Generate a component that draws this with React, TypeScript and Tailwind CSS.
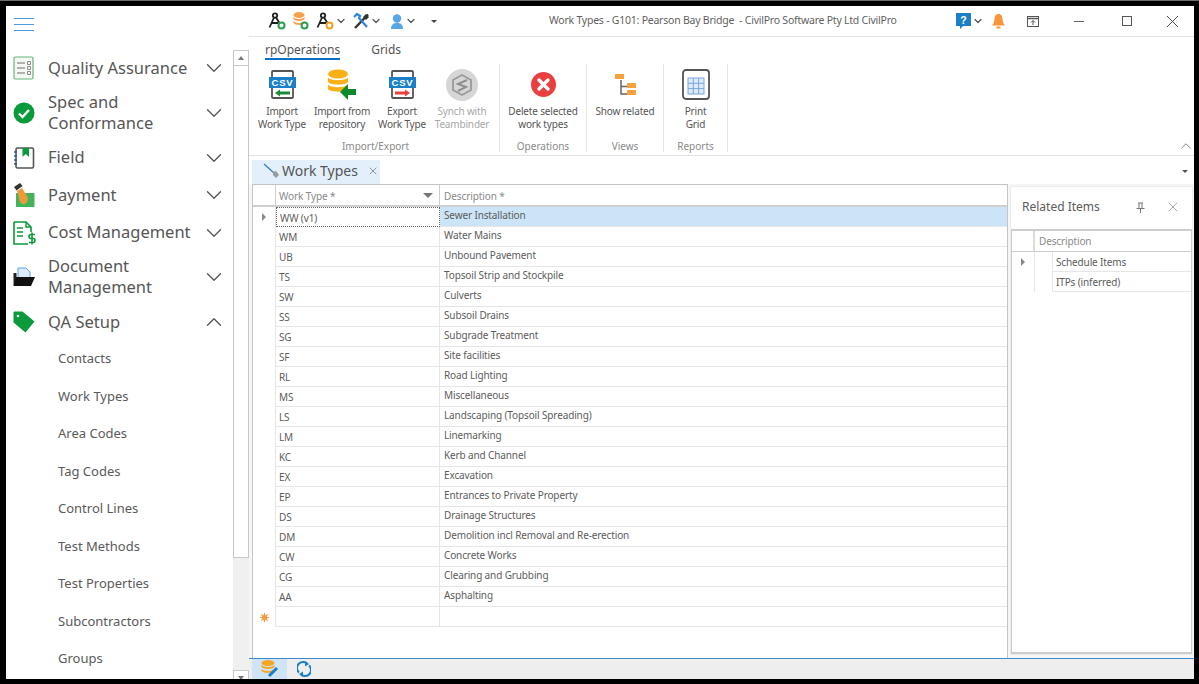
import { ChevronDown, ChevronUp, X } from "lucide-react";

const workTypes = [
  ["WW (v1)", "Sewer Installation"],
  ["WM", "Water Mains"],
  ["UB", "Unbound Pavement"],
  ["TS", "Topsoil Strip and Stockpile"],
  ["SW", "Culverts"],
  ["SS", "Subsoil Drains"],
  ["SG", "Subgrade Treatment"],
  ["SF", "Site facilities"],
  ["RL", "Road Lighting"],
  ["MS", "Miscellaneous"],
  ["LS", "Landscaping (Topsoil Spreading)"],
  ["LM", "Linemarking"],
  ["KC", "Kerb and Channel"],
  ["EX", "Excavation"],
  ["EP", "Entrances to Private Property"],
  ["DS", "Drainage Structures"],
  ["DM", "Demolition incl Removal and Re-erection"],
  ["CW", "Concrete Works"],
  ["CG", "Clearing and Grubbing"],
  ["AA", "Asphalting"],
];

const subItems = [
  "Contacts",
  "Work Types",
  "Area Codes",
  "Tag Codes",
  "Control Lines",
  "Test Methods",
  "Test Properties",
  "Subcontractors",
  "Groups",
];

const QualityIcon = () => (
  <svg width="22" height="24" viewBox="0 0 22 24" fill="none">
    <rect x="1" y="1" width="19" height="22" rx="1.500" fill="#f3f8f3" stroke="#66b37a" strokeWidth="1.200" />
    <path d="M4 7h8M4 12h8M4 17h8" stroke="#9a9a9a" strokeWidth="1.300" />
    <path d="M14.500 5.500h3v3h-3zM14.500 10.500h3v3h-3zM14.500 15.500h3v3h-3z" stroke="#8a8a8a" />
  </svg>
);

const CheckIcon = () => (
  <svg width="22" height="22" viewBox="0 0 22 22">
    <circle cx="11" cy="11" r="10.500" fill="#0a9a3c" />
    <path d="M6 11.500l3.500 3.500L16 8" fill="none" stroke="#fff" strokeWidth="2.400" />
  </svg>
);

const FieldIcon = () => (
  <svg width="22" height="22" viewBox="0 0 22 22" fill="none">
    <rect x="3" y="1" width="17.500" height="20" rx="1.500" fill="#fff" stroke="#555" strokeWidth="1.600" />
    <path d="M9.500 1h6.500v9l-3.250-3-3.250 3z" fill="#0a9a3c" />
    <path d="M1 5h3M1 9h3M1 13h3M1 17h3" stroke="#2f5f8f" strokeWidth="1.500" />
  </svg>
);

const PaymentIcon = () => (
  <svg width="22" height="25" viewBox="0 0 22 25">
    <rect x="3" y="10" width="18.500" height="14" fill="#45b35a" />
    <path d="M1 4l6-4 2.500 3-6 4.500z" fill="#333" />
    <path d="M4 8l5-3 5 8c2 3 0 8-3 8-3 0-5-3-5-6z" fill="#ef9a3a" />
  </svg>
);

const CostIcon = () => (
  <svg width="23" height="24" viewBox="0 0 23 24" fill="none">
    <path d="M1 1h12l5 5v5M15 23H1V1" stroke="#0a9a3c" strokeWidth="1.600" />
    <path d="M13 1v5h5M4 7h6M4 11h6M4 15h6" stroke="#0a9a3c" strokeWidth="1.400" />
    <path d="M22 13.500h-4a1.800 1.800 0 000 4h2a1.800 1.800 0 010 4h-4M19 11.500v12" stroke="#0a9a3c" strokeWidth="1.600" />
  </svg>
);

const DocumentIcon = () => (
  <svg width="22" height="20" viewBox="0 0 22 20">
    <path d="M5 1h8l4 4v8H5z" fill="#dcecfb" stroke="#5aa6e8" />
    <path d="M0.500 6h3v6l-.5 7h-2.500z" fill="#222" />
    <path d="M3 10h19l-4 9H1z" fill="#111" />
  </svg>
);

const TagIcon = () => (
  <svg width="22" height="22" viewBox="0 0 22 22">
    <path d="M0.500 1.500a1 1 0 011-1h8l12 10-9 11-12-10z" fill="#0a9a3c" />
    <circle cx="5" cy="5" r="1.300" fill="#fff" />
  </svg>
);

const Compass = ({ badge }: { badge: string }) => (
  <svg width="18" height="18" viewBox="0 0 18 18" fill="none">
    <circle cx="7" cy="3.500" r="2.200" stroke="#222" strokeWidth="1.800" />
    <path d="M6 5.500L1.500 15.500M8 5.500l3.500 5.500M3 11h7" stroke="#222" strokeWidth="1.800" />
    <circle cx="13.500" cy="13.500" r="3" stroke={badge} strokeWidth="2" />
  </svg>
);

const TitleDatabase = () => (
  <svg width="16" height="18" viewBox="0 0 16 18">
    <ellipse cx="6" cy="3" rx="5.500" ry="3" fill="#f5a04a" />
    <path d="M0.500 5c1.500 2.500 9.500 2.500 11 0v2c-1.500 2.500-9.500 2.500-11 0zM0.500 9c1.500 2.500 9.500 2.500 11 0v2c-1.500 2.500-9.500 2.500-11 0z" fill="#f5a04a" />
    <circle cx="11.500" cy="13.500" r="3" fill="none" stroke="#2e9e4f" strokeWidth="2" />
  </svg>
);

const CsvIcon = ({ arrow, dir }: { arrow: string; dir: "left" | "right" }) => (
  <svg width="27" height="29" viewBox="0 0 27 29">
    <rect x="3" y="1" width="21" height="27" rx="1" fill="#fff" stroke="#555" strokeWidth="1.800" />
    <rect x="0" y="7" width="27" height="11" fill="#1c7fc9" />
    <text x="13.500" y="16" textAnchor="middle" fontSize="9.500" fontWeight="700" fill="#fff" fontFamily="Liberation Sans, sans-serif" letterSpacing="0.800">
      CSV
    </text>
    <path d={dir === "left" ? "M6 23l5-3.500v2h10v3H11v2z" : "M21 23l-5-3.500v2H6v3h10v2z"} fill={arrow} />
  </svg>
);

const RepositoryIcon = () => (
  <svg width="30" height="31" viewBox="0 0 30 31">
    <ellipse cx="11" cy="5" rx="10" ry="4.500" fill="#fbb017" />
    <path d="M1 8.500c2 3.500 18 3.500 20 0V13c-2 3.500-18 3.500-20 0zM1 15.500c2 3.500 18 3.500 20 0V20c-2 3.500-18 3.500-20 0z" fill="#fbb017" />
    <path d="M13 23l8-8v5h8v6h-8v5z" fill="#0e8a2c" />
  </svg>
);

const TeambinderIcon = () => (
  <svg width="32" height="32" viewBox="0 0 32 32" fill="none">
    <circle cx="16" cy="16" r="16" fill="#d6d6d6" />
    <path d="M16 6l9 5v10l-9 5-9-5V11z" stroke="#9a9a9a" strokeWidth="1.800" />
    <path d="M21 11l-9 4 8 3-8 4" stroke="#8f8f8f" strokeWidth="2" />
  </svg>
);

const DeleteIcon = () => (
  <svg width="25" height="25" viewBox="0 0 25 25">
    <circle cx="12.500" cy="12.500" r="12.500" fill="#e8403f" />
    <path d="M8 8l9 9M17 8l-9 9" stroke="#fff" strokeWidth="3.400" strokeLinecap="round" />
  </svg>
);

const RelatedIcon = () => (
  <svg width="21" height="22" viewBox="0 0 21 22">
    <path d="M6 6v14h6M6 12.500h6" stroke="#666" strokeWidth="1.500" fill="none" />
    <rect x="0" y="0" width="9" height="5" rx="0.500" fill="#f9a23c" />
    <rect x="12" y="9" width="9" height="5" rx="0.500" fill="#f9a23c" />
    <rect x="12" y="16" width="9" height="5" rx="0.500" fill="#f9a23c" />
  </svg>
);

const PrintGridIcon = () => (
  <svg width="28" height="31" viewBox="0 0 28 31" fill="none">
    <rect x="1" y="1" width="26" height="29" rx="3" fill="#fff" stroke="#555" strokeWidth="1.800" />
    <rect x="6" y="9" width="16" height="16" fill="#dceafa" stroke="#7ba7d8" />
    <path d="M11.300 9v16M16.600 9v16M6 14.300h16M6 19.600h16" stroke="#7ba7d8" />
  </svg>
);

const TitleCaret = () => <ChevronDown size={12} strokeWidth={2.500} className="text-[#555]" />;

const SideRow = ({
  icon,
  label,
  tall,
  open,
}: {
  icon: React.ReactNode;
  label: React.ReactNode;
  tall?: boolean;
  open?: boolean;
}) => (
  <div className={`flex items-center pl-[7px] pr-[6px] ${tall ? "h-[52px]" : "h-[37.500px]"}`}>
    <div className="flex w-[35px] shrink-0 items-center">{icon}</div>
    <div className="flex-1 pb-[2px] text-[16.500px] leading-[21px] text-[#565656]">{label}</div>
    {open ? (
      <ChevronUp size={26} strokeWidth={1.200} className="text-[#555]" />
    ) : (
      <ChevronDown size={26} strokeWidth={1.200} className="text-[#555]" />
    )}
  </div>
);

const Sidebar = () => (
  <div className="flex h-full w-[243px] shrink-0">
    <div className="w-[227px] overflow-hidden">
      <div className="flex h-[43.250px] items-start pl-[8px] pt-[12px]">
        <div className="flex w-[20px] flex-col gap-[5px]">
          <div className="h-px bg-[#4a9ae0]" />
          <div className="h-px bg-[#4a9ae0]" />
          <div className="h-px bg-[#4a9ae0]" />
        </div>
      </div>
      <SideRow icon={<QualityIcon />} label="Quality Assurance" />
      <SideRow icon={<CheckIcon />} label={<>Spec and<br />Conformance</>} tall />
      <SideRow icon={<FieldIcon />} label="Field" />
      <SideRow icon={<PaymentIcon />} label="Payment" />
      <SideRow icon={<CostIcon />} label="Cost Management" />
      <SideRow icon={<DocumentIcon />} label={<>Document<br />Management</>} tall />
      <SideRow icon={<TagIcon />} label="QA Setup" open />
      {subItems.map((item) => (
        <div key={item} className="flex h-[37.500px] items-center pb-px pl-[52px] text-[13px] text-[#5a5a5a]">
          {item}
        </div>
      ))}
    </div>
    <div className="mt-[44px] flex w-[16px] flex-col overflow-hidden bg-[#f0f0f0]">
      <div className="flex h-[16px] shrink-0 items-center justify-center border border-[#c8c8c8] bg-white">
        <div className="h-0 w-0 border-x-[3px] border-b-[4px] border-x-transparent border-b-[#777]" />
      </div>
      <div className="h-[492px] shrink-0 border border-t-0 border-[#c8c8c8] bg-white" />
      <div className="h-[112px] shrink-0" />
      <div className="flex h-[16px] shrink-0 items-center justify-center border border-[#c8c8c8] bg-white">
        <div className="h-0 w-0 border-x-[3px] border-t-[4px] border-x-transparent border-t-[#777]" />
      </div>
    </div>
  </div>
);

const TitleBar = () => (
  <div className="flex h-[31px] shrink-0 items-center border-b border-[#e3e3e3] pl-[19px] text-[#555]">
    <Compass badge="#2e9e4f" />
    <div className="ml-[7px]">
      <TitleDatabase />
    </div>
    <div className="ml-[7px] flex items-center gap-[1px]">
      <Compass badge="#f0a020" />
      <TitleCaret />
    </div>
    <svg className="ml-[6px]" width="17" height="17" viewBox="0 0 17 17" fill="none">
      <path d="M15 1.500L2 15" stroke="#333" strokeWidth="2.400" />
      <path d="M1 4l3-3 3 2-1 2 8 9" stroke="#2f86d8" strokeWidth="2.200" />
      <path d="M10 4l3-3 3 3-3 3z" fill="#333" />
    </svg>
    <TitleCaret />
    <svg className="ml-[8px]" width="14" height="15" viewBox="0 0 14 15">
      <circle cx="7" cy="4.500" r="4.200" fill="#59a6e6" />
      <path d="M1 15c0-5 3-6 6-6s6 1 6 6z" fill="#59a6e6" />
    </svg>
    <div className="ml-[1px]">
      <TitleCaret />
    </div>
    <div className="ml-[14px] h-0 w-0 border-x-[3px] border-t-[3px] border-x-transparent border-t-[#444]" />
    <div className="ml-[112px] w-[350px] whitespace-pre text-[10.500px] tracking-[-0.23px] text-[#5f5f5f]">
      Work Types - G101: Pearson Bay Bridge  - CivilPro Software Pty Ltd CivilPro
    </div>
    <svg className="ml-[57px]" width="15" height="16" viewBox="0 0 15 16">
      <path d="M0 0h15v13H7l-3 3v-3H0z" fill="#1c7fc9" />
      <text x="7.500" y="10.500" textAnchor="middle" fontSize="10.500" fontWeight="700" fill="#fff" fontFamily="Liberation Sans, sans-serif">
        ?
      </text>
    </svg>
    <div className="ml-[1px]">
      <TitleCaret />
    </div>
    <svg className="ml-[8px]" width="13" height="15" viewBox="0 0 13 15">
      <path d="M6.500 0c3 0 4 2.500 4 5s1 5 2.500 6.500H0C1.500 10 2.500 7.500 2.500 5s1-5 4-5z" fill="#f9963a" />
      <rect x="4.500" y="12.500" width="4" height="2" fill="#f9963a" />
    </svg>
    <svg className="ml-[22px]" width="12" height="11" viewBox="0 0 12 11" fill="none">
      <rect x="0.500" y="0.500" width="11" height="10" stroke="#555" />
      <path d="M0.500 2.500h11" stroke="#555" strokeWidth="1.500" />
      <path d="M6 9V4.500M4 6.500l2-2 2 2" stroke="#555" />
    </svg>
    <div className="ml-[35px] h-px w-[10px] bg-[#666]" />
    <div className="ml-[38px] h-[10px] w-[10px] border border-[#555]" />
    <X className="ml-[30px] text-[#444]" size={21} strokeWidth={1.100} />
  </div>
);

const RibbonButton = ({
  icon,
  lines,
  muted,
}: {
  icon: React.ReactNode;
  lines: string[];
  muted?: boolean;
}) => (
  <div className="flex w-[60px] shrink-0 flex-col items-center pt-[3px]">
    <div className="flex h-[35px] items-center justify-center">{icon}</div>
    <div className={`mt-[2.500px] text-center text-[10px] leading-[13px] tracking-[-0.17px] whitespace-nowrap ${muted ? "text-[#a8a8a8]" : "text-[#555]"}`}>
      {lines.map((line) => (
        <div key={line}>{line}</div>
      ))}
    </div>
  </div>
);

const RibbonGroup = ({
  label,
  w,
  children,
}: {
  label: string;
  w: string;
  children: React.ReactNode;
}) => (
  <div className={`flex h-[88px] shrink-0 flex-col border-r border-[#e4e4e4] ${w}`}>
    <div className="flex h-[78px] justify-center">{children}</div>
    <div className="text-center text-[10px] leading-[11px] text-[#8a8a8a]">{label}</div>
  </div>
);

const Ribbon = () => (
  <div className="h-[119px] shrink-0 border-b border-[#e3e3e3]">
    <div className="flex h-[27px] items-start pl-[16px] pt-[5px] text-[12px] text-[#555]">
      <div className="h-[18px] border-b-2 border-[#0f6fc6] leading-[16px]">rpOperations</div>
      <div className="ml-[31px] leading-[16px]">Grids</div>
    </div>
    <div className="relative flex pl-[3px]">
      <RibbonGroup label="Import/Export" w="w-[248px]">
        <div className="flex pr-[7px]">
          <RibbonButton icon={<CsvIcon arrow="#1d8a34" dir="left" />} lines={["Import", "Work Type"]} />
          <RibbonButton icon={<RepositoryIcon />} lines={["Import from", "repository"]} />
          <RibbonButton icon={<CsvIcon arrow="#e8403f" dir="right" />} lines={["Export", "Work Type"]} />
          <RibbonButton icon={<TeambinderIcon />} lines={["Synch with", "Teambinder"]} muted />
        </div>
      </RibbonGroup>
      <RibbonGroup label="Operations" w="w-[87px]">
        <RibbonButton icon={<DeleteIcon />} lines={["Delete selected", "work types"]} />
      </RibbonGroup>
      <RibbonGroup label="Views" w="w-[77px]">
        <RibbonButton icon={<RelatedIcon />} lines={["Show related"]} />
      </RibbonGroup>
      <RibbonGroup label="Reports" w="w-[64px]">
        <RibbonButton icon={<PrintGridIcon />} lines={["Print", "Grid"]} />
      </RibbonGroup>
      <ChevronUp className="absolute right-[-1px] bottom-[-3px] text-[#777]" size={18} strokeWidth={1.200} />
    </div>
  </div>
);

const DocTabs = () => (
  <div className="flex h-[28px] shrink-0 items-end pl-[3px]">
    <div className="flex h-[24px] w-[128px] shrink-0 items-center bg-[#e3f0fb] pb-[3px] pl-[11px]">
      <svg className="shrink-0" width="18" height="16" viewBox="0 0 18 16" fill="none">
        <path d="M1 1l10 9" stroke="#3b7fc4" strokeWidth="1.300" />
        <path d="M10 9l3-1 3 4-3 3-3-3z" fill="#9a9a9a" />
      </svg>
      <span className="ml-px whitespace-nowrap text-[14px] text-[#555]">Work Types</span>
      <X className="ml-[9px] shrink-0 text-[#777]" size={12} strokeWidth={1.500} />
    </div>
    <div className="mb-[11px] ml-[802px] h-0 w-0 border-x-[3px] border-t-[3px] border-x-transparent border-t-[#555]" />
  </div>
);

const Indicator = () => (
  <div className="h-0 w-0 border-y-[4px] border-l-[4px] border-y-transparent border-l-[#8a8a8a]" />
);

const WorkTypesGrid = () => (
  <div className="flex h-full w-[756px] shrink-0 flex-col border border-b-0 border-[#c4c4c4] bg-white">
    <div className="flex h-[22px] shrink-0 border-b-2 border-[#cfcfcf] text-[10px] tracking-[-0.1px] text-[#8a8a8a]">
      <div className="w-[23px] shrink-0 border-r border-[#cfcfcf]" />
      <div className="flex w-[164px] shrink-0 items-center justify-between border-r border-[#cfcfcf] pl-[3px] pr-[6px]">
        <span className="pt-[3px]">Work Type *</span>
        <div className="h-0 w-0 border-x-[5px] border-t-[5px] border-x-transparent border-t-[#777]" />
      </div>
      <div className="flex items-center pl-[4px] pt-[3px]">Description *</div>
    </div>
    {workTypes.map(([code, description], i) => (
      <div key={code} className="flex h-[20px] shrink-0 text-[10px] tracking-[-0.13px] text-[#5c5c5c]">
        <div className="flex w-[23px] shrink-0 items-center justify-center border-r border-[#e6e6e6]">
          {i === 0 && <Indicator />}
        </div>
        <div
          className={`w-[164px] shrink-0 pl-[3px] pt-[3px] leading-[15px] ${
            i === 0 ? "border border-dotted border-[#666]" : "border-r border-b border-[#e6e6e6]"
          }`}
        >
          {code}
        </div>
        <div className={`flex-1 border-b border-[#e6e6e6] pl-[4px] pt-px leading-[15px] ${i === 0 ? "bg-[#cce4f7]" : ""}`}>
          {description}
        </div>
      </div>
    ))}
    <div className="flex h-[20px] shrink-0">
      <div className="flex w-[23px] shrink-0 items-center justify-center border-r border-[#e6e6e6]">
        <svg width="9" height="9" viewBox="0 0 9 9">
          <path d="M4.500 0v9M0 4.500h9M1.300 1.300l6.400 6.400M7.700 1.300L1.300 7.700" stroke="#f59a3c" strokeWidth="1.200" />
          <circle cx="4.500" cy="4.500" r="2.500" fill="#f59a3c" />
        </svg>
      </div>
      <div className="w-[164px] shrink-0 border-r border-b border-[#e6e6e6]" />
      <div className="flex-1 border-b border-[#e6e6e6]" />
    </div>
  </div>
);

const RelatedPanel = () => (
  <div className="mb-[3px] ml-[2px] mt-[2px] flex w-[183px] shrink-0 flex-col border border-[#ececec] bg-white">
    <div className="flex h-[42px] shrink-0 items-center pb-[2px] pl-[11px] pr-[11px] text-[12px] text-[#5c5c5c]">
      <span className="flex-1">Related Items</span>
      <svg width="9" height="11" viewBox="0 0 9 11" fill="none" className="mr-[20px]">
        <path d="M2 1h5M3 1v5M6 1v5M0.500 6.500h8M4.500 6.500V11" stroke="#777" />
      </svg>
      <X className="text-[#888]" size={16} strokeWidth={1.100} />
    </div>
    <div className="flex flex-1 flex-col border border-t-2 border-b-2 border-[#cdcdcd] text-[10px] tracking-[-0.13px] text-[#5c5c5c]">
      <div className="flex h-[21px] shrink-0 border-b border-[#cdcdcd] text-[#8a8a8a]">
        <div className="w-[23px] shrink-0 border-r-2 border-[#dcdcdc]" />
        <div className="flex items-center pl-[4px]">Description</div>
      </div>
      <div className="flex h-[20px] shrink-0">
        <div className="flex w-[23px] shrink-0 items-center justify-center border-r border-[#e6e6e6]">
          <Indicator />
        </div>
        <div className="w-[18px] shrink-0 border-r border-[#e6e6e6]" />
        <div className="flex flex-1 items-center border-b border-[#e6e6e6] pl-[3px] pt-[2px]">Schedule Items</div>
      </div>
      <div className="flex h-[20px] shrink-0">
        <div className="w-[23px] shrink-0 border-r border-[#e6e6e6]" />
        <div className="w-[18px] shrink-0 border-r border-[#e6e6e6]" />
        <div className="flex flex-1 items-center border-b border-[#e6e6e6] pl-[3px] pt-[2px]">ITPs (inferred)</div>
      </div>
    </div>
  </div>
);

const BottomBar = () => (
  <div className="flex h-[21px] shrink-0 items-center border-t border-[#3a8ad0] bg-[#eeeeee] pl-[3px]">
    <div className="flex h-full w-[35px] items-start justify-center bg-[#cfe4f7] pt-[1px]">
      <svg width="19" height="19" viewBox="0 0 19 19">
        <ellipse cx="8" cy="3" rx="6.500" ry="3" fill="#f5a623" />
        <path d="M1.500 5c2 2.500 11 2.500 13 0v2c-2 2.500-11 2.500-13 0zM1.500 9c2 2.500 11 2.500 13 0v2c-2 2.500-11 2.500-13 0z" fill="#f5a623" />
        <path d="M9 16l8-8" stroke="#1c7fc9" strokeWidth="3" />
      </svg>
    </div>
    <svg className="ml-[10px]" width="14" height="16" viewBox="0 0 14 16" fill="none">
      <path d="M2 11.500A6 6 0 0110 2.500" stroke="#1c7fc9" strokeWidth="2" />
      <path d="M12 4.500A6 6 0 014 13.500" stroke="#1c7fc9" strokeWidth="2" />
      <path d="M8 0l4 3-4 2.500zM6 16l-4-3 4-2.500z" fill="#1c7fc9" />
    </svg>
  </div>
);

export default function App() {
  return (
    <div className="flex h-[684px] w-[1199px] flex-col overflow-hidden bg-black pb-[5px] pr-[5px] font-['Noto_Sans',sans-serif]">
      <div className="mr-[-5px] h-px shrink-0 bg-[#6e6e6e]" />
      <div className="ml-[6px] mt-[5px] flex min-h-0 flex-1 bg-white">
        <Sidebar />
        <div className="flex min-w-0 flex-1 flex-col">
          <TitleBar />
          <Ribbon />
          <DocTabs />
          <div className="flex min-h-0 flex-1 bg-[#f6f6f6] pl-[3px]">
            <WorkTypesGrid />
            <RelatedPanel />
          </div>
          <BottomBar />
        </div>
      </div>
    </div>
  );
}
